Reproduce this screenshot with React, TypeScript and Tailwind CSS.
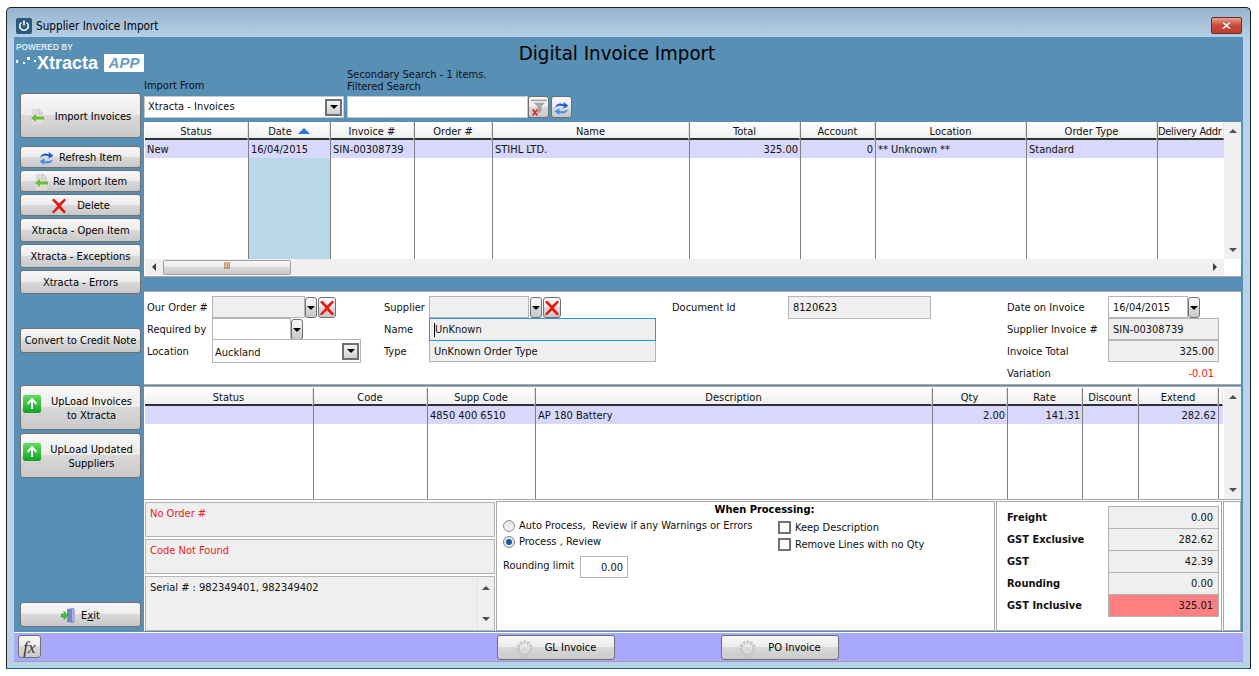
import type { ReactNode } from 'react';

const btnBg = 'bg-[linear-gradient(#f8f8f8_0%,#ececec_48%,#d9d9d9_50%,#c9c9c9_100%)]';

function ImportIcon() {
    return (
        <svg width="16" height="18" viewBox="0 0 16 18">
            <path d="M2 1h7l4 4v12H2z" fill="#dcdcd8" />
            <path d="M9 1l4 4H9z" fill="#f8f8f8" stroke="#999" strokeWidth="0.5" />
            <path d="M1 10l5-4v2.500h8v3H6V14z" fill="#6cc02c" />
        </svg>
    );
}

function RefreshIcon() {
    return (
        <svg width="15" height="15" viewBox="0 0 14 14">
            <path d="M1 6C2 2.500 6 1.500 9 3.200V1l4.500 3.500L9 7V5C7 4 4 4 1 6z" fill="#1a5fd0" />
            <path d="M13 8c-1 3.500-5 4.500-8 2.800V13L.5 9.500 5 7v2c2 1 5 1 8-1z" fill="#3f8ae8" />
        </svg>
    );
}

function RedX({ size = 16 }: { size?: number }) {
    return (
        <svg width={size} height={size} viewBox="0 0 16 16">
            <path d="M1 2l2-1.500 5 5 5.500-5L15 2 9.800 8 15 14l-2 1.500-5-5.300L2.500 15.500 1 14l5.500-6z" fill="#e8160c" />
        </svg>
    );
}

function UpArrow() {
    return (
        <div className="w-[18px] h-[18px] rounded-[2px] bg-[linear-gradient(#5ee05a,#12a02a)] flex items-center justify-center">
            <svg width="14" height="14" viewBox="0 0 14 14">
                <path d="M7 2v10M2.500 7L7 2l4.500 5" fill="none" stroke="#fff" strokeWidth="2" />
            </svg>
        </div>
    );
}

function ExitIcon() {
    return (
        <svg width="15" height="15" viewBox="0 0 15 15">
            <path d="M6 1l7-1v15l-7-1z" fill="#7d84c4" />
            <path d="M11 1h3v13h-3z" fill="#aab0dc" />
            <path d="M0 6h3V3.500L7 7.500l-4 4V9H0z" fill="#37c72c" stroke="#1d8a1a" strokeWidth="0.5" />
        </svg>
    );
}

function Gear() {
    return (
        <svg width="17" height="17" viewBox="0 0 17 17">
            <circle cx="8.500" cy="8.500" r="6.300" fill="none" stroke="#c4c4c4" strokeWidth="3.600" strokeDasharray="2.200 1.300" />
            <circle cx="8.500" cy="8.500" r="4" fill="none" stroke="#e4e4e4" strokeWidth="1.500" />
        </svg>
    );
}

function FilterIcon() {
    return (
        <svg width="18" height="18" viewBox="0 0 18 18">
            <path d="M1 1h16l-6 6.500V12l-3 2V7.500z" fill="#a8a8a8" stroke="#808080" strokeWidth="0.5" />
            <path d="M1 2h16l-2 1.800H3z" fill="#e8e8e8" />
            <path d="M2 11l1.500-1 1.500 2 1.800-2L8 11l-2 2.500L8 16l-1.200 1-1.800-2-1.800 2L2 16l2-2.500z" fill="#e0201c" />
        </svg>
    );
}

function Btn({ className, children }: { className: string; children: ReactNode }) {
    return (
        <div className={`border border-[#707070] rounded-[3px] ${btnBg} flex items-center justify-center pt-[2px] text-black shrink-0 ${className}`}>
            {children}
        </div>
    );
}

function SideBtn({ h, mt, children }: { h: string; mt: string; children: ReactNode }) {
    return <Btn className={`w-[121px] ml-[6px] ${h} ${mt}`}>{children}</Btn>;
}

function Caret() {
    return <div className="w-0 h-0 border-x-[4px] border-x-transparent border-t-[4px] border-t-black" />;
}

function DropBtn({ className = '' }: { className?: string }) {
    return (
        <Btn className={`w-[12px] h-[21px] ${className}`}>
            <Caret />
        </Btn>
    );
}

function GridHead({ title, sorted, align = 'center' }: { title: string; sorted?: boolean; align?: string }) {
    return (
        <div className={`h-[18px] shrink-0 pt-[4px] border-b-2 border-b-[#303030] bg-[linear-gradient(#ffffff,#f0f0f0)] border-r border-r-[#e4e4e4] flex items-center gap-[6px] overflow-hidden whitespace-nowrap ${align === 'left' ? 'justify-start tracking-[-0.3px]' : 'justify-center'}`}>
            <span>{title}</span>
            {sorted && <div className="w-0 h-0 -mt-[2px] border-x-[6px] border-x-transparent border-b-[6px] border-b-[#2a76d6]" />}
        </div>
    );
}

type Col = { title: string; w: string; value?: string; right?: boolean; fill?: string; head?: string };

function GridColumn({ col, last, sorted }: { col: Col; last?: boolean; sorted?: boolean }) {
    return (
        <div className={`flex flex-col shrink-0 ${col.w} ${last ? '' : 'border-r border-r-[#808080]'}`}>
            <GridHead title={col.title} sorted={sorted} align={col.head} />
            <div className={`h-[18px] shrink-0 bg-[#d8d8fc] px-[2px] pt-[2px] flex items-center whitespace-nowrap overflow-hidden ${col.right ? 'justify-end' : ''}`}>
                {col.value}
            </div>
            <div className={`flex-1 ${col.fill ?? ''}`} />
        </div>
    );
}

function VScroll({ className = '' }: { className?: string }) {
    return (
        <div className={`w-[17px] bg-[#f0f0f0] shrink-0 flex flex-col items-center justify-between py-[7px] ${className}`}>
            <div className="w-0 h-0 border-x-[4px] border-x-transparent border-b-[4px] border-b-[#505050]" />
            <div className="w-0 h-0 border-x-[4px] border-x-transparent border-t-[4px] border-t-[#505050]" />
        </div>
    );
}

const topCols: Col[] = [
    { title: 'Status', w: 'w-[104px]', value: 'New' },
    { title: 'Date', w: 'w-[82px]', value: '16/04/2015', fill: 'bg-[#b8d7e8]' },
    { title: 'Invoice #', w: 'w-[84px]', value: 'SIN-00308739' },
    { title: 'Order #', w: 'w-[78px]' },
    { title: 'Name', w: 'w-[197px]', value: 'STIHL LTD.' },
    { title: 'Total', w: 'w-[111px]', value: '325.00', right: true },
    { title: 'Account', w: 'w-[75px]', value: '0', right: true },
    { title: 'Location', w: 'w-[151px]', value: '** Unknown **' },
    { title: 'Order Type', w: 'w-[131px]', value: 'Standard' },
    { title: 'Delivery Addr', w: 'w-[66px]', head: 'left' },
];

const lineCols: Col[] = [
    { title: 'Status', w: 'w-[169px]' },
    { title: 'Code', w: 'w-[114px]' },
    { title: 'Supp Code', w: 'w-[108px]', value: '4850 400 6510' },
    { title: 'Description', w: 'w-[397px]', value: 'AP 180 Battery' },
    { title: 'Qty', w: 'w-[75px]', value: '2.00', right: true },
    { title: 'Rate', w: 'w-[75px]', value: '141.31', right: true },
    { title: 'Discount', w: 'w-[56px]' },
    { title: 'Extend', w: 'w-[80px]', value: '282.62', right: true },
    { title: '', w: 'w-[4px]' },
];

function Field({ w, children, right, white, h = 'h-[22px]', border = 'border-[#b4b4b4]', className = 'px-[4px] pt-[2px]' }: { w: string; children?: ReactNode; right?: boolean; white?: boolean; h?: string; border?: string; className?: string }) {
    return (
        <div className={`${w} ${h} shrink-0 border ${border} flex items-center whitespace-nowrap ${white ? 'bg-white' : 'bg-[#efefef]'} ${right ? 'justify-end' : ''} ${className}`}>
            {children}
        </div>
    );
}

function FormRow({ label, labelW, children }: { label: string; labelW: string; children?: ReactNode }) {
    return (
        <div className="flex items-center h-[22px]">
            <div className={`${labelW} shrink-0 pt-[2px]`}>{label}</div>
            {children}
        </div>
    );
}

function TotalRow({ label, value, pink }: { label: string; value: string; pink?: boolean }) {
    return (
        <div className="flex items-center h-[22px]">
            <div className="w-[101px] shrink-0 font-bold pt-[2px]">{label}</div>
            <div className={`w-[111px] h-[23px] -mb-px border border-[#b4b4b4] px-[5px] flex items-center justify-end ${pink ? 'bg-[#ff8080]' : 'bg-[#efefef]'}`}>{value}</div>
        </div>
    );
}

function MessageBox({ red, children }: { red?: boolean; children: ReactNode }) {
    return <div className={`h-[35px] border border-[#b4b4b4] bg-[#efefef] px-[4px] pt-[4px] ${red ? 'text-[#f01818]' : ''}`}>{children}</div>;
}

export default function App() {
    return (
        <div className="w-[1259px] h-[676px] bg-white pt-[7px] pl-[6px] overflow-hidden text-[11px] leading-[14px] text-[#101010] font-['DejaVu_Sans_Condensed','Liberation_Sans',sans-serif]">
            <div className="w-[1245px] h-[662px] border-x border-b border-t border-[#202020] border-b-[#0a6a80] rounded-t-[5px] bg-[linear-gradient(#98b4d0,#b9d2e9_5%)] flex flex-col">
                {/* Title bar */}
                <div className="h-[29px] shrink-0 flex items-center pl-[9px] pr-[8px] pt-[6px]">
                    <div className="w-[16px] h-[16px] rounded-[2px] bg-[#2c5a7c] flex items-center justify-center">
                        <svg width="12" height="12" viewBox="0 0 12 12">
                            <path d="M3.500 2.500a4.300 4.300 0 1 0 5 0M6 .5v5" fill="none" stroke="#fff" strokeWidth="1.500" />
                        </svg>
                    </div>
                    <span className="ml-[4px] text-[11.7px] text-black">Supplier Invoice Import</span>
                    <div className="ml-auto w-[31px] h-[17px] border border-[#6a2a2a] rounded-[2px] bg-[linear-gradient(#e8a090,#c84a38_50%,#c04030)] flex items-center justify-center">
                        <svg width="13" height="9" viewBox="0 0 13 9">
                            <path d="M1.500 1h2.500l2.500 2L9 1h2.500L8 4.500 11.500 8H9L6.500 6 4 8H1.500L5 4.500z" fill="#fff" stroke="#7a4038" strokeWidth="0.5" />
                        </svg>
                    </div>
                </div>

                {/* Client area */}
                <div className="mx-[7px] w-[1229px] bg-[#588fb5] flex flex-col">
                    <div className="flex h-[595px]">
                        {/* Left column */}
                        <div className="w-[130px] shrink-0 flex flex-col relative">
                            <div className="h-[56px] shrink-0 pl-[2px] pt-[5px] text-white font-['Liberation_Sans',sans-serif]">
                                <div className="text-[8.3px] leading-[10px] font-bold text-[#dfeaf2]">POWERED BY</div>
                                <div className="flex items-center mt-[2px]">
                                    <svg width="22" height="16" viewBox="0 0 22 16">
                                        <rect x="0" y="5" width="2" height="3" fill="#fff" />
                                        <rect x="7" y="7" width="2" height="2" fill="#fff" />
                                        <rect x="11" y="2" width="3" height="3" fill="#fff" />
                                        <rect x="18" y="5" width="2" height="2" fill="#fff" />
                                    </svg>
                                    <span className="-ml-[1px] text-[18px] leading-[18px] font-bold">Xtracta</span>
                                    <span className="ml-[6px] w-[40px] h-[18px] rounded-[1px] bg-white text-[#6a9cc0] text-[15px] leading-[18px] font-bold italic text-center">APP</span>
                                </div>
                            </div>
                            <SideBtn h="h-[45px]" mt="mt-0">
                                <ImportIcon />
                                <span className="ml-[9px]">Import Invoices</span>
                            </SideBtn>
                            <SideBtn h="h-[22px]" mt="mt-[8px]">
                                <RefreshIcon />
                                <span className="ml-[5px]">Refresh Item</span>
                            </SideBtn>
                            <SideBtn h="h-[22px]" mt="mt-[2px]">
                                <ImportIcon />
                                <span className="ml-[3px]">Re Import Item</span>
                            </SideBtn>
                            <SideBtn h="h-[22px]" mt="mt-[2px]">
                                <RedX />
                                <span className="ml-[10px]">Delete</span>
                            </SideBtn>
                            <SideBtn h="h-[24px]" mt="mt-[2px]">Xtracta - Open Item</SideBtn>
                            <SideBtn h="h-[24px]" mt="mt-[2px]">Xtracta - Exceptions</SideBtn>
                            <SideBtn h="h-[24px]" mt="mt-[2px]">Xtracta - Errors</SideBtn>
                            <SideBtn h="h-[25px]" mt="mt-[34px]"><span className="pb-[2px]">Convert to Credit Note</span></SideBtn>
                            <SideBtn h="h-[45px]" mt="mt-[32px]">
                                <div className="w-[18px] shrink-0 -mt-[9px] -ml-[2px]"><UpArrow /></div>
                                <div className="w-[90px] ml-[6px] text-center leading-[14px]">UpLoad Invoices<br />to Xtracta</div>
                            </SideBtn>
                            <SideBtn h="h-[45px]" mt="mt-[3px]">
                                <div className="w-[18px] shrink-0 -mt-[9px] -ml-[2px]"><UpArrow /></div>
                                <div className="w-[90px] ml-[6px] text-center leading-[14px]">UpLoad Updated<br />Suppliers</div>
                            </SideBtn>
                            <SideBtn h="h-[25px]" mt="mt-auto mb-[5px]">
                                <ExitIcon />
                                <span className="ml-[5px]">E<span className="underline">x</span>it</span>
                            </SideBtn>
                        </div>

                        {/* Main column */}
                        <div className="w-[1097px] shrink-0 flex flex-col">
                            <div className="h-[85px] shrink-0 flex flex-col">
                                <div className="w-[946px] text-center text-[20.300px] leading-[24px] text-black pt-[4px] h-[37px] shrink-0">Digital Invoice Import</div>
                                <div className="flex items-end h-[44px]">
                                    <div className="w-[203px] shrink-0">
                                        <div className="h-[14px] pt-px">Import From</div>
                                        <div className="mt-[4px] w-[200px] h-[22px] border border-[#c8c8c8] bg-white flex items-center pl-[3px] pr-[1px] justify-between">
                                            <span>Xtracta - Invoices</span>
                                            <div className="w-[17px] h-[17px] border-2 border-[#707070] bg-[linear-gradient(#f4f4f4,#cfcfcf)] flex items-center justify-center"><Caret /></div>
                                        </div>
                                    </div>
                                    <div className="shrink-0">
                                        <div className="h-[12px] pt-px">Secondary Search - 1 items.</div>
                                        <div className="h-[12px] pt-px">Filtered Search</div>
                                        <div className="flex items-center mt-[5px]">
                                            <div className="w-[181px] h-[22px] border border-[#c8c8c8] bg-white" />
                                            <Btn className="w-[21px] h-[22px]"><FilterIcon /></Btn>
                                            <Btn className="w-[21px] h-[22px] ml-[2px]"><RefreshIcon /></Btn>
                                        </div>
                                    </div>
                                </div>
                            </div>

                            {/* Invoice grid */}
                            <div className="h-[155px] shrink-0 w-[1097px] bg-white border-b border-b-[#a8a8a8] flex pl-px">
                                <div className="w-[1079px] flex flex-col shrink-0">
                                    <div className="flex flex-1 min-h-0">
                                        {topCols.map((c, i) => (
                                            <GridColumn key={c.title} col={c} last={i === topCols.length - 1} sorted={c.title === 'Date'} />
                                        ))}
                                    </div>
                                    <div className="h-[16px] shrink-0 mb-px bg-[#f0f0f0] flex items-center">
                                        <div className="w-[18px] flex justify-center">
                                            <div className="w-0 h-0 border-y-[4px] border-y-transparent border-r-[4px] border-r-[#404040]" />
                                        </div>
                                        <div className={`w-[128px] h-[15px] border border-[#a0a0a0] rounded-[2px] ${btnBg} flex items-center justify-center text-[8px] leading-[8px] text-[#404040]`}>III</div>
                                        <div className="ml-auto w-[18px] flex justify-center">
                                            <div className="w-0 h-0 border-y-[4px] border-y-transparent border-l-[4px] border-l-[#404040]" />
                                        </div>
                                    </div>
                                </div>
                                <div className="flex flex-col">
                                    <VScroll className="flex-1" />
                                    <div className="h-[17px] shrink-0" />
                                </div>
                            </div>

                            <div className="h-[14px] shrink-0" />

                            {/* Order form */}
                            <div className="h-[94px] shrink-0 w-[1097px] bg-white border-y border-[#a8a8a8] flex pl-[3px] pt-[4px]">
                                <div className="w-[237px] shrink-0">
                                    <FormRow label="Our Order #" labelW="w-[65px]">
                                        <Field w="w-[93px]" />
                                        <DropBtn />
                                        <Btn className="w-[18px] h-[21px] ml-px"><RedX /></Btn>
                                    </FormRow>
                                    <FormRow label="Required by" labelW="w-[65px]">
                                        <Field w="w-[79px]" white />
                                        <DropBtn />
                                    </FormRow>
                                    <FormRow label="Location" labelW="w-[65px]">
                                        <Field w="w-[149px]" white h="h-[24px]" className="justify-between pl-[2px] pr-px">
                                            <span className="pt-[3px]">Auckland</span>
                                            <div className="w-[17px] h-[17px] border-2 border-[#707070] bg-[linear-gradient(#f4f4f4,#cfcfcf)] flex items-center justify-center"><Caret /></div>
                                        </Field>
                                    </FormRow>
                                </div>
                                <div className="w-[288px] shrink-0">
                                    <FormRow label="Supplier" labelW="w-[45px]">
                                        <Field w="w-[100px]" />
                                        <DropBtn className="ml-px" />
                                        <Btn className="w-[18px] h-[21px] ml-px"><RedX /></Btn>
                                    </FormRow>
                                    <FormRow label="Name" labelW="w-[45px]">
                                        <Field w="w-[227px]" h="h-[23px]" border="border-[#3090f0]" className="px-[4px] pt-[2px] relative z-10">
                                            <span className="border-l border-black">UnKnown</span>
                                        </Field>
                                    </FormRow>
                                    <FormRow label="Type" labelW="w-[45px]">
                                        <Field w="w-[227px]">UnKnown Order Type</Field>
                                    </FormRow>
                                </div>
                                <div className="w-[335px] shrink-0">
                                    <FormRow label="Document Id" labelW="w-[116px]">
                                        <Field w="w-[143px]" h="h-[23px]">8120623</Field>
                                    </FormRow>
                                </div>
                                <div className="shrink-0">
                                    <FormRow label="Date on Invoice" labelW="w-[101px]">
                                        <Field w="w-[80px]" white>16/04/2015</Field>
                                        <DropBtn />
                                    </FormRow>
                                    <FormRow label="Supplier Invoice #" labelW="w-[101px]">
                                        <Field w="w-[111px]">SIN-00308739</Field>
                                    </FormRow>
                                    <FormRow label="Invoice Total" labelW="w-[101px]">
                                        <Field w="w-[111px]" right>325.00</Field>
                                    </FormRow>
                                    <FormRow label="Variation" labelW="w-[101px]">
                                        <div className="w-[111px] pr-[5px] pt-[2px] text-right text-[#f01818]">-0.01</div>
                                    </FormRow>
                                </div>
                            </div>

                            {/* Lines grid */}
                            <div className="h-[114px] mt-px shrink-0 w-[1097px] bg-white border-t border-t-[#a8a8a8] border-b border-b-[#a8a8a8] flex pl-px pt-px">
                                <div className="w-[1079px] flex shrink-0">
                                    {lineCols.map((c, i) => (
                                        <GridColumn key={c.title || 'end'} col={c} last={i === lineCols.length - 1} />
                                    ))}
                                </div>
                                <VScroll />
                            </div>

                            {/* Bottom panels */}
                            <div className="h-[131px] shrink-0 w-[1097px] flex gap-[1px] pt-px bg-white">
                                <div className="w-[351px] shrink-0 flex flex-col gap-[2px] pt-px pl-px">
                                    <MessageBox red>No Order #</MessageBox>
                                    <MessageBox red>Code Not Found</MessageBox>
                                    <div className="flex-1 flex border border-[#b4b4b4] bg-[#efefef]">
                                        <div className="flex-1 px-[4px] pt-[4px]">Serial # : 982349401, 982349402</div>
                                        <div className="w-[16px] mr-px my-px bg-[#f0f0f0] border-l border-l-[#e4e4e4] flex flex-col items-center justify-between py-[8px]">
                                            <div className="w-0 h-0 border-x-[4px] border-x-transparent border-b-[4px] border-b-[#505050]" />
                                            <div className="w-0 h-0 border-x-[4px] border-x-transparent border-t-[4px] border-t-[#505050]" />
                                        </div>
                                    </div>
                                </div>
                                <div className="w-[499px] shrink-0 bg-white border border-[#a8a8a8] pl-[6px] flex flex-col">
                                    <div className="text-center font-bold pl-[32px] h-[14px] pt-px text-black">When Processing:</div>
                                    <div className="flex mt-[2px]">
                                        <div className="w-[275px] shrink-0">
                                            <div className="flex items-center h-[16px] gap-[4px]">
                                                <div className="w-[12px] h-[12px] rounded-full border border-[#909090] bg-[linear-gradient(#e0e0e0,#f8f8f8)]" />
                                                <span>Auto Process,&nbsp; Review if any Warnings or Errors</span>
                                            </div>
                                            <div className="flex items-center h-[16px] gap-[4px]">
                                                <div className="w-[12px] h-[12px] rounded-full border border-[#808080] bg-[#e8e8e8] flex items-center justify-center">
                                                    <div className="w-[6px] h-[6px] rounded-full bg-[#1060a0]" />
                                                </div>
                                                <span>Process , Review</span>
                                            </div>
                                        </div>
                                        <div className="shrink-0 pt-[1px]">
                                            <div className="flex items-center h-[17px] gap-[4px]">
                                                <div className="w-[13px] h-[13px] border-2 border-[#707070] bg-white" />
                                                <span>Keep Description</span>
                                            </div>
                                            <div className="flex items-center h-[17px] gap-[4px]">
                                                <div className="w-[13px] h-[13px] border-2 border-[#707070] bg-white" />
                                                <span>Remove Lines with no Qty</span>
                                            </div>
                                        </div>
                                    </div>
                                    <div className="flex items-center mt-[3px]">
                                        <div className="w-[77px] shrink-0 pb-[2px]">Rounding limit</div>
                                        <Field w="w-[48px]" white right>0.00</Field>
                                    </div>
                                </div>
                                <div className="w-[226px] shrink-0 bg-white border border-[#a8a8a8] pl-[10px] pt-[4px]">
                                    <TotalRow label="Freight" value="0.00" />
                                    <TotalRow label="GST Exclusive" value="282.62" />
                                    <TotalRow label="GST" value="42.39" />
                                    <TotalRow label="Rounding" value="0.00" />
                                    <TotalRow label="GST Inclusive" value="325.01" pink />
                                </div>
                                <div className="w-[18px] shrink-0 bg-white border border-[#a8a8a8]" />
                            </div>
                        </div>
                    </div>

                    {/* Footer */}
                    <div className="h-[30px] shrink-0 bg-[#a8a8ff] border-t border-t-white border-b border-b-[#a0a0b0] flex items-center pl-[4px]">
                        <Btn className="w-[23px] h-[23px] -mt-[2px]">
                            <span className="font-['Liberation_Serif',serif] italic text-[17px] leading-[17px] text-[#303030]">fx</span>
                        </Btn>
                        <Btn className="w-[118px] h-[25px] ml-[456px]">
                            <Gear />
                            <span className="ml-[12px]">GL Invoice</span>
                        </Btn>
                        <Btn className="w-[118px] h-[25px] ml-[106px]">
                            <Gear />
                            <span className="ml-[12px]">PO Invoice</span>
                        </Btn>
                    </div>
                </div>
            </div>
        </div>
    );
}
